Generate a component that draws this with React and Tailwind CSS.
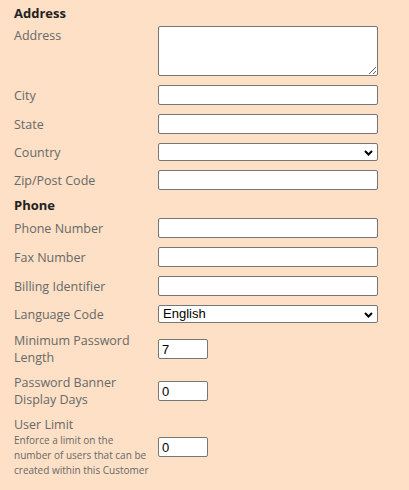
import { useState } from "react";

const labelCls = "w-[144px] shrink-0 text-[12.5px] leading-[17px] text-[#686868]";
const inputCls =
  "block h-[20px] bg-white border border-[#767676] rounded-[2px] px-[3px] text-[13px] text-black outline-none";

function Chevron() {
  return (
    <svg
      className="pointer-events-none absolute right-[5px] top-[7px]"
      width="9"
      height="6"
      viewBox="0 0 9 6"
    >
      <polyline points="1,1 4.5,4.5 8,1" fill="none" stroke="#000" strokeWidth="2" />
    </svg>
  );
}

function Row({ label, children, className = "mt-[9px]" }) {
  return (
    <div className={`flex items-center ${className}`}>
      <div className={labelCls}>{label}</div>
      {children}
    </div>
  );
}

function SelectBox({ value, options }) {
  return (
    <div className="relative w-[220px] h-[18px]">
      <select
        defaultValue={value}
        className="block w-full h-[18px] appearance-none bg-white border border-[#767676] rounded-[2px] pl-[4px] text-[13px] leading-[16px] text-black outline-none"
        style={{ fontFamily: '"Liberation Sans", Arial, sans-serif' }}
      >
        {options.map((o) => (
          <option key={o}>{o}</option>
        ))}
      </select>
      <Chevron />
    </div>
  );
}

export default function App() {
  const [minLen, setMinLen] = useState("7");
  const [bannerDays, setBannerDays] = useState("0");
  const [userLimit, setUserLimit] = useState("0");

  const arial = { fontFamily: '"Liberation Sans", Arial, sans-serif' };

  return (
    <div
      className="min-h-[490px] w-[409px] bg-[#fde0c5] pl-[14px] pt-[4px]"
      style={{ fontFamily: '"Open Sans", "Noto Sans", sans-serif' }}
    >
      <div className="flex flex-col">
        {/* ADDRESS */}
        <h2 className="h-[18px] text-[13px] leading-[18px] font-bold text-[#222]">Address</h2>

        <div className="flex items-start mt-[4px] h-[50px]">
          <div className={`${labelCls} pt-[1px]`}>Address</div>
          <textarea className="block w-[220px] h-[50px] bg-white border border-[#767676] rounded-[2px] outline-none" />
        </div>

        <Row label="City">
          <input className={`${inputCls} w-[220px]`} />
        </Row>
        <Row label="State">
          <input className={`${inputCls} w-[220px]`} />
        </Row>
        <Row label="Country">
          <SelectBox value="" options={[""]} />
        </Row>
        <Row label="Zip/Post Code">
          <input className={`${inputCls} w-[220px]`} />
        </Row>

        {/* PHONE */}
        <h2 className="mt-[6px] h-[18px] text-[13px] leading-[18px] font-bold text-[#222]">Phone</h2>

        <Row label="Phone Number" className="mt-[4px]">
          <input className={`${inputCls} w-[220px]`} />
        </Row>
        <Row label="Fax Number">
          <input className={`${inputCls} w-[220px]`} />
        </Row>
        <Row label="Billing Identifier">
          <input className={`${inputCls} w-[220px]`} />
        </Row>
        <Row label="Language Code">
          <SelectBox value="English" options={["English", "French", "German", "Spanish"]} />
        </Row>

        <Row label={<>Minimum Password<br />Length</>}>
          <input
            value={minLen}
            onChange={(e) => setMinLen(e.target.value)}
            className={`${inputCls} w-[50px]`}
            style={arial}
          />
        </Row>
        <Row label={<>Password Banner<br />Display Days</>} className="mt-[8px]">
          <input
            value={bannerDays}
            onChange={(e) => setBannerDays(e.target.value)}
            className={`${inputCls} w-[50px]`}
            style={arial}
          />
        </Row>
        <Row
          className="mt-[8px]"
          label={
            <>
              <div>User Limit</div>
              <div className="text-[10px] leading-[15px]">
                Enforce a limit on the
                <br />
                number of users that can be
                <br />
                created within this Customer
              </div>
            </>
          }
        >
          <input
            value={userLimit}
            onChange={(e) => setUserLimit(e.target.value)}
            className={`${inputCls} w-[50px]`}
            style={arial}
          />
        </Row>
      </div>
    </div>
  );
}
